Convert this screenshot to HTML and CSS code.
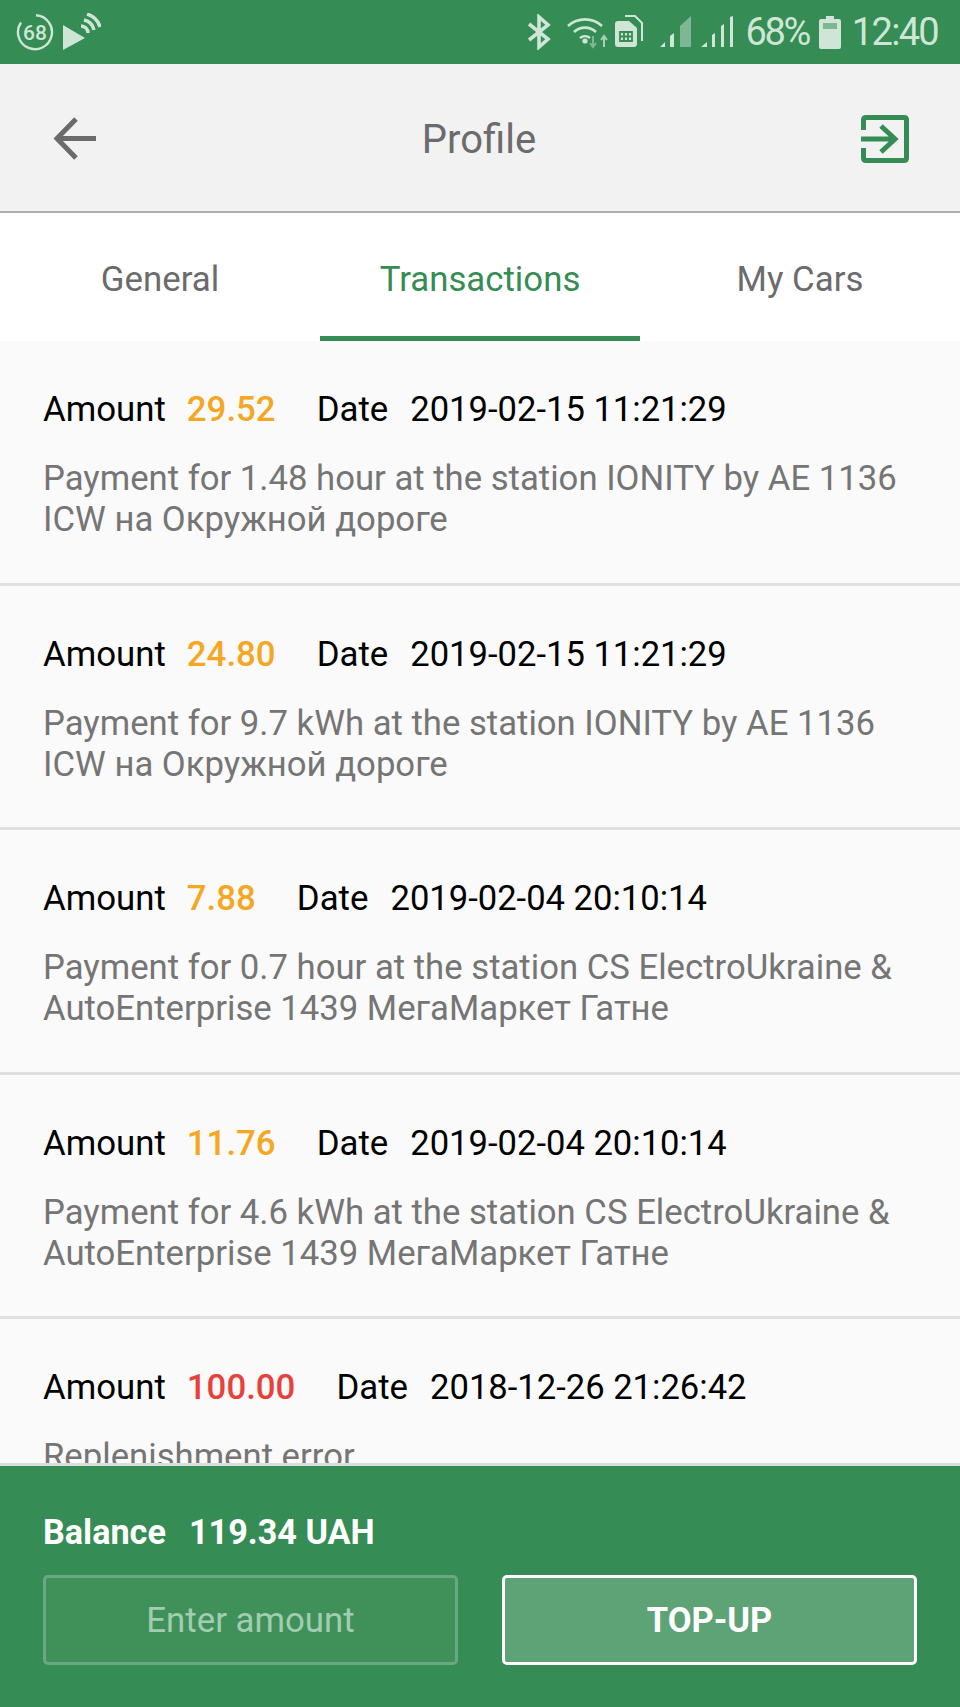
FILE: index.html
```html
<!DOCTYPE html>
<html lang="en">

<head>
    <meta charset="utf-8">
    <meta name="viewport" content="width=device-width, initial-scale=1.0">
    <title>Profile</title>
    <link rel="stylesheet" href="styles.css">
</head>

<body>
    <div class="screen">
        <!-- Status bar -->
        <div class="status">
            <div class="status-left">
                <svg class="ic-count" width="38" height="38" viewBox="0 0 38 38">
                    <path d="M20 2.2A17 17 0 1 1 5 9.5" fill="none" stroke="#cfe6d7" stroke-width="2.4"/>
                    <text x="19" y="26.500" text-anchor="middle" class="count-text">68</text>
                </svg>
                <svg class="ic-cast" width="38" height="38" viewBox="0 0 38 38">
                    <path d="M0 12L22 25L0 37Z" fill="#cfe6d7"/>
                    <path d="M18 13A7 7 0 0 1 25 20M21 7A13 13 0 0 1 31 17M24 1A19 19 0 0 1 37 14" fill="none" stroke="#cfe6d7" stroke-width="3.400"/>
                </svg>
            </div>
            <div class="status-right">
                <svg class="ic-bt" width="24" height="36" viewBox="0 0 24 36">
                    <path d="M2 10L21 25L12 33V3L21 11L2 26" fill="none" stroke="#cfe6d7" stroke-width="3.600"/>
                </svg>
                <svg class="ic-wifi" width="44" height="34" viewBox="0 0 44 34">
                    <path d="M2 11A25 25 0 0 1 36 11M8 17A16 16 0 0 1 30 17M14 23A8 8 0 0 1 24 23" fill="none" stroke="#cfe6d7" stroke-width="2.600"/>
                    <circle cx="19" cy="26" r="2.600" fill="#cfe6d7"/>
                    <path d="M27 21V31M24 28L27 32L30 28" fill="none" stroke="#7fb794" stroke-width="2"/>
                    <path d="M38 32V21M35 25L38 21L41 25" fill="none" stroke="#a9d0b7" stroke-width="2"/>
                </svg>
                <svg class="ic-sim" width="30" height="34" viewBox="0 0 30 34">
                    <path d="M12 1H22L29 8V26" fill="none" stroke="#cfe6d7" stroke-width="2"/>
                    <path d="M2 9Q2 6 5 6H16L24 13V29Q24 32 21 32H5Q2 32 2 29Z" fill="#cfe6d7"/>
                    <path d="M7 17H19V26H7ZM11 17V26M15 17V26M7 21.500H19" fill="none" stroke="#358c54" stroke-width="1.800"/>
                </svg>
                <svg class="ic-signal-a" width="31" height="32" viewBox="0 0 31 32">
                    <path d="M0 31L5 26V31ZM10 31V20L14 17V31Z" fill="#cfe6d7"/>
                    <path d="M20 31V10L31 0V31Z" fill="#7fb794"/>
                </svg>
                <svg class="ic-signal-b" width="32" height="32" viewBox="0 0 32 32">
                    <path d="M0 31L6 26V31ZM11 31V19L14 17V31ZM20 31V10L23 8V31ZM29 31V1L32 0V31Z" fill="#cfe6d7"/>
                </svg>
                <span class="status-text pct">68%</span>
                <svg class="ic-batt" width="22" height="33" viewBox="0 0 22 33">
                    <path d="M7 0H15V3H20Q22 3 22 5V31Q22 33 20 33H2Q0 33 0 31V5Q0 3 2 3H7Z" fill="#cfe6d7"/>
                    <path d="M4 7H18V13H4Z" fill="#7fb794"/>
                </svg>
                <span class="status-text">12:40</span>
            </div>
        </div>

        <!-- Cabecera -->
        <div class="header">
            <svg class="ic-back" width="44" height="43" viewBox="0 0 44 43">
                <path d="M43 21.500H5M23 2L4 21.500L23 41" fill="none" stroke="#6b6b6b" stroke-width="5"/>
            </svg>
            <h1 class="title">Profile</h1>
            <svg class="ic-exit" width="48" height="48" viewBox="0 0 48 48">
                <path d="M2.500 15V5Q2.500 2.500 5 2.500H43Q45.500 2.500 45.500 5V43Q45.500 45.500 43 45.500H5Q2.500 45.500 2.500 43V33" fill="none" stroke="#358c54" stroke-width="5"/>
                <path d="M0 24H34M20 11L34 24L20 37" fill="none" stroke="#358c54" stroke-width="5"/>
            </svg>
        </div>

        <!-- Tabs -->
        <div class="tabs">
            <div class="tab">General</div>
            <div class="tab active">Transactions</div>
            <div class="tab">My Cars</div>
        </div>

        <!-- Lista de transacciones -->
        <div class="list">
            <div class="row">
                <p class="line"><span>Amount</span><b class="val orange">29.52</b><span class="date-label">Date</span><span class="date">2019-02-15 11:21:29</span></p>
                <p class="desc">Payment for 1.48 hour at the station IONITY by AE 1136 ICW на Окружной дороге</p>
            </div>
            <div class="row">
                <p class="line"><span>Amount</span><b class="val orange">24.80</b><span class="date-label">Date</span><span class="date">2019-02-15 11:21:29</span></p>
                <p class="desc">Payment for 9.7 kWh at the station IONITY by AE 1136 ICW на Окружной дороге</p>
            </div>
            <div class="row">
                <p class="line"><span>Amount</span><b class="val orange">7.88</b><span class="date-label">Date</span><span class="date">2019-02-04 20:10:14</span></p>
                <p class="desc">Payment for 0.7 hour at the station CS ElectroUkraine &amp; AutoEnterprise 1439 МегаМаркет Гатне</p>
            </div>
            <div class="row">
                <p class="line"><span>Amount</span><b class="val orange">11.76</b><span class="date-label">Date</span><span class="date">2019-02-04 20:10:14</span></p>
                <p class="desc">Payment for 4.6 kWh at the station CS ElectroUkraine &amp; AutoEnterprise 1439 МегаМаркет Гатне</p>
            </div>
            <div class="row">
                <p class="line"><span>Amount</span><b class="val red">100.00</b><span class="date-label">Date</span><span class="date">2018-12-26 21:26:42</span></p>
                <p class="desc">Replenishment error</p>
            </div>
        </div>

        <!-- Balance -->
        <div class="footer">
            <div class="balance"><span>Balance</span><span>119.34 UAH</span></div>
            <div class="actions">
                <div class="input">Enter amount</div>
                <div class="btn">TOP-UP</div>
            </div>
        </div>
    </div>
</body>
</html>
```

FILE: styles.css
```css
* {
    box-sizing: border-box;
}

body {
    margin: 0;
    font-family: Roboto, "Noto Sans", sans-serif;
}

.screen {
    width: 960px;
    height: 1707px;
    display: flex;
    flex-direction: column;
    overflow: hidden;
}

/* Status bar */
.status {
    height: 64px;
    flex: none;
    background: #358c54;
    display: flex;
    justify-content: space-between;
    align-items: center;
    padding: 0 22px 0 16px;
    color: #cfe6d7;
}

.status-left,
.status-right {
    display: flex;
    align-items: center;
}

.status-left {
    gap: 9px;
}

.status-right svg {
    flex: none;
}

.ic-wifi {
    margin-left: 15px;
}

.ic-sim {
    margin-left: 3px;
}

.ic-signal-a {
    margin-left: 17px;
}

.ic-signal-b {
    margin-left: 10px;
}

.ic-batt {
    margin: 0 11px 0 10px;
}

.count-text {
    font-size: 21px;
    font-weight: 500;
    fill: #cfe6d7;
}

.status-text {
    font-size: 38px;
    line-height: 44px;
    letter-spacing: -1.700px;
}

.pct {
    margin-left: 13px;
    letter-spacing: -2.400px;
}

/* Header */
.header {
    height: 149px;
    flex: none;
    background: #f2f2f2;
    border-bottom: 2px solid #adadad;
    display: flex;
    justify-content: space-between;
    align-items: center;
    padding: 2px 51px 0 53px;
}

.title {
    margin: 2px 0 0;
    font-size: 40px;
    font-weight: 400;
    color: #6b6b6b;
}

/* Tabs */
.tabs {
    height: 128px;
    flex: none;
    background: #fff;
    display: flex;
}

.tab {
    flex: 1;
    display: flex;
    align-items: center;
    justify-content: center;
    padding-top: 8px;
    font-size: 34.800px;
    color: #6b6b6b;
    border-bottom: 5px solid transparent;
}

.tab.active {
    color: #358c54;
    border-bottom-color: #358c54;
}

/* List */
.list {
    flex: 1;
    min-height: 0;
    overflow: hidden;
    background: #fafafa;
}

.row {
    height: 244.500px;
    padding: 46px 43px 0;
    border-bottom: 3px solid #e0e0e0;
}

.line {
    margin: 0;
    display: flex;
    font-size: 34.800px;
    line-height: 44px;
    color: #000;
}

.val {
    margin-left: 21px;
    font-weight: 500;
}

.orange {
    color: #f5a623;
}

.red {
    color: #e8403a;
}

.date-label {
    margin-left: 41px;
}

.date {
    margin-left: 22px;
    font-size: 34.600px;
}

.desc {
    margin: 27px 0 0;
    font-size: 34.700px;
    line-height: 41px;
    color: #757575;
}

/* Footer */
.footer {
    height: 244px;
    flex: none;
    background: #358c54;
    border-top: 3px solid #dcdcdc;
    padding: 44px 43px 0;
    color: #fff;
}

.balance {
    display: flex;
    gap: 23px;
    font-size: 34.200px;
    line-height: 44px;
    font-weight: 700;
}

.actions {
    display: flex;
    gap: 44px;
    margin-top: 21px;
}

.input,
.btn {
    flex: 1;
    height: 90px;
    border-radius: 5px;
    display: flex;
    align-items: center;
    justify-content: center;
    font-size: 34.800px;
}

.input {
    background: #3f9159;
    border: 3px solid #6aa882;
    color: #a3cdb2;
}

.btn {
    background: #5da376;
    border: 3px solid #fff;
    font-size: 34.500px;
    font-weight: 700;
}
```
